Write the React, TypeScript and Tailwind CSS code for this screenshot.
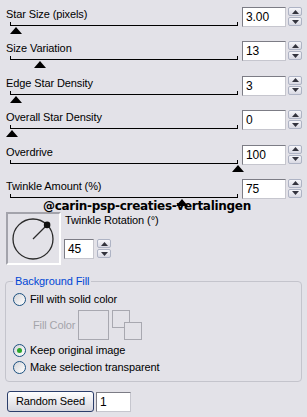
import React from "react";

const sliders = [
  { label: "Star Size (pixels)", value: "3.00", thumb: 5 },
  { label: "Size Variation", value: "13", thumb: 29 },
  { label: "Edge Star Density", value: "3", thumb: 5 },
  { label: "Overall Star Density", value: "0", thumb: 1 },
  { label: "Overdrive", value: "100", thumb: 226.5 },
  { label: "Twinkle Amount (%)", value: "75", thumb: 170.5 },
];

function Spinner() {
  return (
    <div className="flex flex-col gap-[1px] w-[14px]">
      <div className="h-[9px] rounded-[2px] border border-[#aeb3c4] bg-gradient-to-b from-[#f6f6fa] to-[#d9d9e3] flex items-center justify-center">
        <svg width="7" height="4" viewBox="0 0 7 4">
          <polygon points="3.5,0 7,4 0,4" fill="#33333d" />
        </svg>
      </div>
      <div className="h-[9px] rounded-[2px] border border-[#aeb3c4] bg-gradient-to-b from-[#f6f6fa] to-[#d9d9e3] flex items-center justify-center">
        <svg width="7" height="4" viewBox="0 0 7 4">
          <polygon points="0,0 7,0 3.5,4" fill="#33333d" />
        </svg>
      </div>
    </div>
  );
}

function Field({ value, w }: { value: string; w: string }) {
  return (
    <div
      className={`${w} h-[20px] border border-[#7c7c85] border-r-[#c6c6ce] border-b-[#c6c6ce] bg-white text-[12px] leading-[18px] pl-[3px] text-black`}
    >
      {value}
    </div>
  );
}

function Radio({ checked, label }: { checked?: boolean; label: string }) {
  return (
    <div className="flex items-center h-[13px] pl-[7px]">
      <span className="w-[13px] h-[13px] rounded-full border border-[#1c5180] bg-gradient-to-br from-[#d4d4d8] to-white flex items-center justify-center">
        {checked && <span className="w-[5px] h-[5px] rounded-full bg-[#2aa62a]" />}
      </span>
      <span className="ml-[4px] leading-[13px]">{label}</span>
    </div>
  );
}

export default function App() {
  return (
    <div className="relative w-[307px] h-[417px] overflow-hidden bg-[#e3e2e8] text-[11px] text-black font-['Liberation_Sans',Arial,sans-serif] tracking-[-0.1px]">
      <div className="flex flex-col pt-[7px]">
        {sliders.map((s) => (
          <div key={s.label} className="flex h-[34.4px]">
            <div className="w-[242px]">
              <div className="pl-[6px] leading-[13px] mt-[1px]">{s.label}</div>
              <div className="relative ml-[10px] mt-[1px] w-[228px] h-[4px] border-x border-b border-black">
                <svg
                  className="absolute top-[5px]"
                  style={{ left: s.thumb - 6 }}
                  width="12"
                  height="7"
                  viewBox="0 0 12 7"
                >
                  <polygon points="6,0 12,7 0,7" fill="#000" />
                </svg>
              </div>
            </div>
            <Field value={s.value} w="w-[44px]" />
            <div className="ml-[2px]">
              <Spinner />
            </div>
          </div>
        ))}
      </div>

      {/* Twinkle rotation */}
      <div className="flex pl-[6px] -mt-[1px]">
        <div className="w-[55px] h-[53px] border-2 border-[#a3a3ab] border-r-white border-b-white">
          <svg width="51" height="49" viewBox="0 0 51 49">
            <circle cx="25" cy="25" r="20" fill="none" stroke="#2a2a2a" strokeWidth="1.3" />
            <line x1="25" y1="25" x2="38.5" y2="11.5" stroke="#2a2a2a" strokeWidth="1.3" />
            <circle cx="39.1" cy="10.9" r="3.3" fill="#111" />
          </svg>
        </div>
        <div className="ml-[3px] flex flex-col">
          <div className="leading-[13px] mt-[2px] pl-[1px]">Twinkle Rotation (°)</div>
          <div className="flex mt-[12px]">
            <Field value="45" w="w-[30px]" />
            <div className="ml-[3px]">
              <Spinner />
            </div>
          </div>
        </div>
      </div>

      {/* Background fill group */}
      <fieldset className="ml-[5px] mt-[10px] w-[297px] border border-[#c4c4cc] rounded-[4px] pb-[7px]">
        <legend className="ml-[7px] px-[2px] leading-[13px] text-[#0046d5]">Background Fill</legend>
        <div className="mt-[5px]">
          <Radio label="Fill with solid color" />
        </div>
        <div className="flex items-center mt-[4px] pl-[27px]">
          <div className="w-[45px] text-[#a4a4aa] leading-[13px]">Fill Color</div>
          <div className="w-[31px] h-[30px] border border-[#a8a8b0]" />
          <svg className="ml-[3px]" width="31" height="30" viewBox="0 0 31 30">
            <rect x="0.5" y="0.5" width="17" height="17" fill="none" stroke="#a8a8b0" />
            <rect x="12.5" y="12.5" width="17" height="17" fill="#e3e2e8" stroke="#a8a8b0" />
          </svg>
        </div>
        <div className="mt-[4px]">
          <Radio checked label="Keep original image" />
        </div>
        <div className="mt-[4px]">
          <Radio label="Make selection transparent" />
        </div>
      </fieldset>

      {/* Random seed */}
      <div className="flex items-center mt-[9px] pl-[7px]">
        <div className="w-[87px] h-[21px] rounded-[3px] border border-[#2b3e6b] bg-gradient-to-b from-white to-[#d6d6de] flex items-center justify-center leading-[13px]">
          Random Seed
        </div>
        <div className="ml-[2px]">
          <Field value="1" w="w-[35px]" />
        </div>
      </div>

      {/* Watermark */}
      <div className="absolute left-[43px] top-[198px] text-[12px] leading-[16px] font-bold tracking-[-0.3px] font-['DejaVu_Sans',sans-serif] text-black">
        @carin-psp-creaties-vertalingen
      </div>
    </div>
  );
}
